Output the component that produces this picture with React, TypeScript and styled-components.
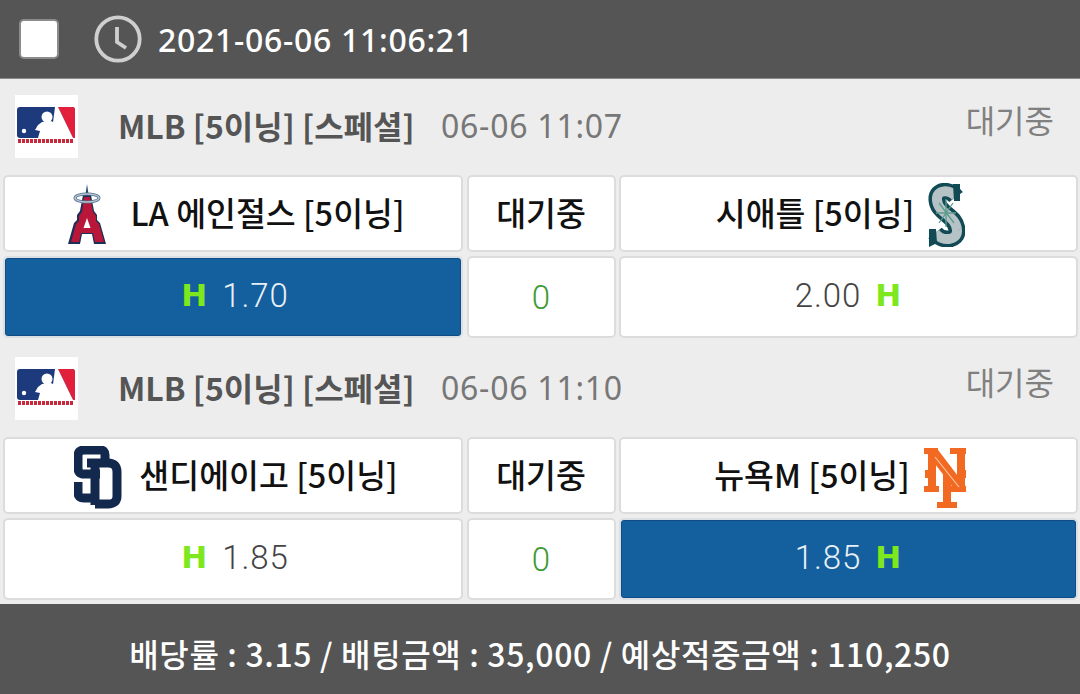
import React from 'react';
import styled, { createGlobalStyle } from 'styled-components';

const GlobalStyle = createGlobalStyle`
    html, body {
        margin: 0;
        padding: 0;
        background: #ededed;
    }
    body {
        font-family: "Noto Sans CJK KR", "Noto Sans", sans-serif;
    }
`;

const MlbLogo = () => (
    <LogoBox>
        <svg width="63" height="63" viewBox="0 0 63 63">
            <rect x="2" y="12" width="58" height="31" rx="3" fill="#1c3a7c" />
            <path d="M43 12h14a3 3 0 0 1 3 3v28h-2z" fill="#e2203c" />
            <path d="M40 12h3l15 31H36z" fill="#fff" />
            <circle cx="32" cy="22" r="5.5" fill="#fff" />
            <path d="M27 27l9-1 8 4 14 13H23l2-7-5-1 3-5z" fill="#fff" />
            <circle cx="9" cy="36" r="2.2" fill="#fff" />
            <path d="M3 46h56" stroke="#c8283c" strokeWidth="4" strokeDasharray="3 1" />
        </svg>
    </LogoBox>
);

const AngelsLogo = () => (
    <svg width="50" height="62" viewBox="0 0 50 62">
        <path d="M20 0l1.5 10h-3z" fill="#274a72" />
        <path d="M16 11h8l3 16 3 4v5l3 3 6 21H26l-2-9h-8l-2 9H1l6-21 3-3v-5l3-4z" fill="#1c2f57" />
        <path d="M17 13h6l3 15 3 4v5l3 3 5 18h-9l-2-9H14l-2 9H4l5-18 3-3v-5l3-4z" fill="#b9173a" />
        <path d="M20 34l3.5 10h-7z" fill="#fff" />
        <path d="M15 50h10l2 10H13z" fill="#fff" />
        <ellipse cx="20" cy="14" rx="12" ry="4" fill="none" stroke="#52708c" strokeWidth="3" />
        <ellipse cx="20" cy="14" rx="12" ry="4" fill="none" stroke="#b4c3cf" strokeWidth="1.4" />
    </svg>
);

const MarinersLogo = () => (
    <svg width="38" height="64" viewBox="0 0 38 64">
        <path d="M29 14C23 6 9 6 10 17c1 14 19 15 20 30 1 11-15 12-22 3" fill="none" stroke="#114a55" strokeWidth="17" />
        <path d="M29 14C23 6 9 6 10 17c1 14 19 15 20 30 1 11-15 12-22 3" fill="none" stroke="#b5c2c6" strokeWidth="10" />
        <path d="M26 1h7v17h-6zM2 46h7l1 14-8 4z" fill="#114a55" />
        <path d="M12 20l15 20M26 20L12 40M19 16v28M9 30h20" stroke="#5d9c8c" strokeWidth="1.3" />
    </svg>
);

const PadresLogo = () => (
    <svg width="52" height="63" viewBox="0 0 52 63" fill="none" stroke="#12284c">
        <path d="M31 14V9q0-5-5-5H10Q4 4 4 10v12q0 6 6 6h16" strokeWidth="9" />
        <path d="M4 36v11q0 5 6 5h10" strokeWidth="9" />
        <path d="M21 15v44" strokeWidth="9" />
        <path d="M13 17h21q9 0 9 9v24q0 8-9 8H21" strokeWidth="9" />
    </svg>
);

const MetsLogo = () => (
    <svg width="44" height="63" viewBox="0 0 44 63" fill="none" stroke="#f26a21">
        <path d="M9 3v41M38 4v40" strokeWidth="8" />
        <path d="M1 5h14M27 5h16M1 43h15M28 43h15" strokeWidth="6" />
        <path d="M2 28h5M37 28h6" strokeWidth="8" />
        <path d="M9 5l29 38" strokeWidth="11" />
        <path d="M24 26v34" strokeWidth="8" />
        <path d="M14 59h20" strokeWidth="6" />
        <path d="M12 11l24 30" stroke="#fbc6a2" strokeWidth="1.2" />
    </svg>
);

const ClockIcon = () => (
    <svg width="48" height="48" viewBox="0 0 48 48">
        <circle cx="24" cy="24" r="21.7" fill="none" stroke="#cfcfcf" strokeWidth="3.8" />
        <path d="M23 12v15l9 6" fill="none" stroke="#cfcfcf" strokeWidth="3.8" />
    </svg>
);

type Game = {
    time: string;
    home: string;
    away: string;
    homeOdds: string;
    awayOdds: string;
    picked: 'home' | 'away';
    homeLogo: React.ReactNode;
    awayLogo: React.ReactNode;
};

const games: Game[] = [
    {
        time: '06-06 11:07',
        home: 'LA 에인절스 [5이닝]',
        away: '시애틀 [5이닝]',
        homeOdds: '1.70',
        awayOdds: '2.00',
        picked: 'home',
        homeLogo: <AngelsLogo />,
        awayLogo: <MarinersLogo />,
    },
    {
        time: '06-06 11:10',
        home: '샌디에이고 [5이닝]',
        away: '뉴욕M [5이닝]',
        homeOdds: '1.85',
        awayOdds: '1.85',
        picked: 'away',
        homeLogo: <PadresLogo />,
        awayLogo: <MetsLogo />,
    },
];

const App = () => (
    <Page>
        <GlobalStyle />
        <Header>
            <CheckBox />
            <ClockIcon />
            <Clock>2021-06-06 11:06:21</Clock>
        </Header>
        <Games>
            {games.map((game) => (
                <GameBlock key={game.time}>
                    <LeagueRow>
                        <MlbLogo />
                        <LeagueName>MLB [5이닝] [스페셜]</LeagueName>
                        <GameTime>{game.time}</GameTime>
                        <Status>대기중</Status>
                    </LeagueRow>
                    <BetGrid>
                        <TeamCell $side="home">
                            {game.homeLogo}
                            <span>{game.home}</span>
                        </TeamCell>
                        <TeamCell>
                            <span>대기중</span>
                        </TeamCell>
                        <TeamCell $side="away">
                            <span>{game.away}</span>
                            {game.awayLogo}
                        </TeamCell>
                        <OddsCell $picked={game.picked === 'home'} $side="home">
                            <Handicap>H</Handicap>
                            {game.homeOdds}
                        </OddsCell>
                        <DrawCell>0</DrawCell>
                        <OddsCell $picked={game.picked === 'away'} $side="away">
                            {game.awayOdds}
                            <Handicap>H</Handicap>
                        </OddsCell>
                    </BetGrid>
                </GameBlock>
            ))}
        </Games>
        <Footer>배당률 : 3.15 / 배팅금액 : 35,000 / 예상적중금액 : 110,250</Footer>
    </Page>
);

const Page = styled.div`
    width: 1080px;
    height: 694px;
    display: flex;
    flex-direction: column;
    overflow: hidden;
    background: #ededed;
`;

const Header = styled.header`
    height: 78px;
    flex: none;
    display: flex;
    align-items: center;
    padding-left: 19px;
    background: #555555;
    border-bottom: 1px solid #8a8a8a;
`;

const CheckBox = styled.div`
    width: 36px;
    height: 36px;
    margin-right: 35px;
    background: #ffffff;
    border: 2px solid #8c8c8c;
    border-radius: 5px;
`;

const Clock = styled.div`
    margin-left: 16px;
    color: #ffffff;
    font-family: "Noto Sans", sans-serif;
    font-size: 32px;
    font-weight: 500;
    letter-spacing: 0.7px;
`;

const Games = styled.main`
    flex: 1;
    display: flex;
    flex-direction: column;
`;

const GameBlock = styled.section`
    height: 262px;
`;

const LeagueRow = styled.div`
    position: relative;
    height: 96px;
    display: flex;
    align-items: center;
    padding-left: 15px;
`;

const LogoBox = styled.div`
    width: 63px;
    height: 63px;
    margin-right: 40px;
    margin-bottom: 2px;
    background: #ffffff;
`;

const LeagueName = styled.div`
    width: 323px;
    margin-bottom: 5px;
    color: #555555;
    font-size: 32px;
    font-weight: 700;
`;

const GameTime = styled.div`
    margin-bottom: 4px;
    color: #777777;
    font-family: "Noto Sans", sans-serif;
    font-size: 32px;
    letter-spacing: 0.75px;
`;

const Status = styled.div`
    position: absolute;
    top: 17px;
    right: 26px;
    color: #808080;
    font-size: 32px;
`;

const BetGrid = styled.div`
    display: grid;
    grid-template-columns: 460px 149px 459px;
    grid-template-rows: 77px 82px;
    column-gap: 3.5px;
    row-gap: 4px;
    padding-left: 3px;
`;

const TeamCell = styled.div<{ $side?: 'home' | 'away' }>`
    display: flex;
    align-items: center;
    justify-content: center;
    gap: 13px;
    box-sizing: border-box;
    padding-left: ${({ $side }) => ($side === 'home' ? '6px' : '0')};
    padding-right: ${({ $side }) => ($side === 'away' ? '16px' : '0')};
    background: #ffffff;
    border: 2px solid #dcdcdc;
    border-radius: 5px;
    color: #111111;
    font-size: 32.5px;
    font-weight: 500;

    span {
        margin-bottom: 4px;
    }

    svg {
        margin-top: 3px;
    }
`;

const OddsCell = styled.div<{ $picked: boolean; $side: 'home' | 'away' }>`
    display: flex;
    align-items: center;
    justify-content: center;
    gap: 14px;
    box-sizing: border-box;
    padding-bottom: 4px;
    padding-left: ${({ $side }) => ($side === 'home' ? '4px' : '0')};
    background: ${({ $picked }) => ($picked ? '#145f9d' : '#ffffff')};
    background-clip: padding-box;
    border: 2px solid ${({ $picked }) => ($picked ? '#d9dfe5' : '#dcdcdc')};
    border-radius: 5px;
    box-shadow: ${({ $picked }) => ($picked ? 'inset 0 0 0 1px #0f4d84' : 'none')};
    color: ${({ $picked }) => ($picked ? '#e8f0f6' : '#444444')};
    font-family: Roboto, sans-serif;
    font-size: 33px;
    font-weight: 300;
    letter-spacing: 0.9px;
`;

const DrawCell = styled.div`
    display: flex;
    align-items: center;
    justify-content: center;
    box-sizing: border-box;
    background: #ffffff;
    border: 2px solid #dcdcdc;
    border-radius: 5px;
    color: #3d9a35;
    font-family: Roboto, sans-serif;
    font-size: 33px;
    font-weight: 300;
`;

const Handicap = styled.span`
    color: #7ee81f;
    font-family: "DejaVu Sans", sans-serif;
    font-size: 31px;
    font-weight: 700;
    line-height: 1;
`;

const Footer = styled.footer`
    height: 82px;
    flex: none;
    display: flex;
    align-items: center;
    justify-content: center;
    padding-top: 8px;
    background: #555555;
    color: #ffffff;
    font-size: 32px;
    font-weight: 500;
    letter-spacing: 0.65px;
`;

export default App;
